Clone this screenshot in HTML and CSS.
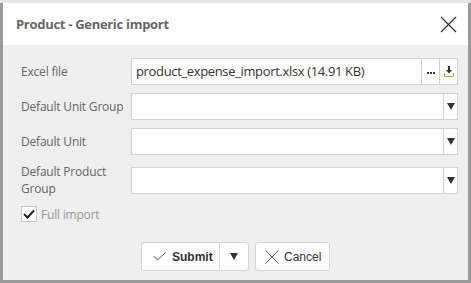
FILE: index.html
```html
<!DOCTYPE html>
<html lang="en">
<head>
  <meta charset="UTF-8">
  <title>Product - Generic import</title>
  <link rel="stylesheet" href="styles.css">
</head>
<body>
  <div class="dialog">
    <div class="dialog-header">
      <h1 class="dialog-title">Product - Generic import</h1>
      <svg class="close-icon" width="17" height="17" viewBox="0 0 17 17">
        <path d="M1 1 L16 16 M16 1 L1 16" stroke="#333" stroke-width="1.3" fill="none"/>
      </svg>
    </div>

    <div class="dialog-body">
      <div class="form-row">
        <label class="form-label">Excel file</label>
        <div class="field">
          <span class="field-text">product_expense_import.xlsx (14.91 KB)</span>
          <span class="field-btn btn-dots">
            <svg width="8" height="2" viewBox="0 0 8 2">
              <rect x="0" y="0" width="2" height="2" fill="#333"/>
              <rect x="3" y="0" width="2" height="2" fill="#333"/>
              <rect x="6" y="0" width="2" height="2" fill="#333"/>
            </svg>
          </span>
          <span class="field-btn">
            <svg width="10" height="11" viewBox="0 0 10 11">
              <path d="M5 0 V6" stroke="#333" stroke-width="2"/>
              <path d="M2 4 L5 7.5 L8 4 Z" fill="#333"/>
              <path d="M0.5 7 V10.5 H9.5 V7" stroke="#e0a040" stroke-width="1" fill="none"/>
            </svg>
          </span>
        </div>
      </div>

      <div class="form-row">
        <label class="form-label">Default Unit Group</label>
        <div class="field">
          <span class="field-text"></span>
          <span class="field-btn select-btn"><span class="arrow"></span></span>
        </div>
      </div>

      <div class="form-row">
        <label class="form-label">Default Unit</label>
        <div class="field">
          <span class="field-text"></span>
          <span class="field-btn select-btn"><span class="arrow"></span></span>
        </div>
      </div>

      <div class="form-row tall">
        <label class="form-label">Default Product Group</label>
        <div class="field">
          <span class="field-text"></span>
          <span class="field-btn select-btn"><span class="arrow"></span></span>
        </div>
      </div>

      <div class="check-row">
        <span class="checkbox">
          <svg width="12" height="10" viewBox="0 0 12 10">
            <path d="M1 5 L4.5 8.5 L11 1.5" stroke="#222" stroke-width="2" fill="none"/>
          </svg>
        </span>
        <span class="check-label">Full import</span>
      </div>

      <div class="actions">
        <div class="split-btn">
          <span class="btn-main">
            <svg width="13" height="9" viewBox="0 0 13 9">
              <path d="M0.5 4 L4.5 8 L12.5 0.5" stroke="#555" stroke-width="1" fill="none"/>
            </svg>
            Submit
          </span>
          <span class="btn-caret"><span class="arrow"></span></span>
        </div>
        <div class="btn">
          <svg width="14" height="14" viewBox="0 0 14 14">
            <path d="M0.5 0.5 L13.5 13.5 M13.5 0.5 L0.5 13.5" stroke="#555" stroke-width="1" fill="none"/>
          </svg>
          Cancel
        </div>
      </div>
    </div>
  </div>
</body>
</html>
```

FILE: styles.css
```css
body {
  margin: 0;
  width: 471px;
  height: 283px;
  background-color: #e6e6e6;
  font-family: 'Open Sans', sans-serif;
  overflow: hidden;
}

.dialog {
  margin-top: 3px;
  height: 277px;
  border: 3px solid #9a9a9a;
  border-top: none;
  background-color: #efefef;
  display: flex;
  flex-direction: column;
}

.dialog-header {
  height: 42px;
  background-color: #fff;
  display: flex;
  align-items: center;
  justify-content: space-between;
  padding: 0 11px 0 13px;
  flex-shrink: 0;
}

.dialog-title {
  margin: 0;
  font-size: 13px;
  font-weight: 700;
  letter-spacing: -0.3px;
  color: #666;
}

.close-icon {
  margin-top: 1px;
}

.dialog-body {
  padding: 13px 10px 0 18px;
}

.form-row {
  display: flex;
  align-items: center;
  height: 27px;
  margin-bottom: 8px;
}

.form-row.tall {
  height: 34px;
}

.form-label {
  width: 110px;
  flex-shrink: 0;
  font-size: 12px;
  letter-spacing: -0.2px;
  line-height: 17px;
  color: #666;
}

.field {
  flex: 1;
  height: 27px;
  box-sizing: border-box;
  border: 1px solid #d2d2d2;
  background-color: #fff;
  display: flex;
  align-items: stretch;
}

.field-text {
  flex: 1;
  padding-left: 4px;
  font-size: 13px;
  letter-spacing: -0.35px;
  line-height: 25px;
  color: #333;
  white-space: nowrap;
  overflow: hidden;
}

.field-btn {
  width: 17px;
  border-left: 1px solid #d2d2d2;
  display: flex;
  align-items: center;
  justify-content: center;
}

.btn-dots {
  padding-top: 3px;
}

.select-btn {
  width: 13px;
}

.arrow {
  width: 0;
  height: 0;
  border-left: 4px solid transparent;
  border-right: 4px solid transparent;
  border-top: 7px solid #333;
}

.check-row {
  display: flex;
  align-items: center;
  height: 16px;
  margin-top: 9px;
}

.checkbox {
  width: 14px;
  height: 14px;
  border: 1px solid #c8c8c8;
  background-color: #fff;
  display: flex;
  align-items: center;
  justify-content: center;
}

.check-label {
  margin-left: 4px;
  font-size: 12px;
  letter-spacing: -0.2px;
  color: #999;
}

.actions {
  display: flex;
  justify-content: center;
  gap: 6px;
  margin-top: 20px;
  padding-right: 8px;
}

.split-btn,
.btn {
  height: 29px;
  box-sizing: border-box;
  border: 1px solid #d4d4d4;
  border-radius: 3px;
  background-color: #fff;
  font-family: 'Liberation Sans', Arial, sans-serif;
  font-size: 12px;
  color: #333;
  display: flex;
  align-items: center;
}

.split-btn {
  width: 108px;
}

.btn-main {
  width: 78px;
  box-sizing: border-box;
  display: flex;
  align-items: center;
  gap: 6px;
  padding-left: 11px;
  font-weight: 700;
  height: 100%;
  border-right: 1px solid #d4d4d4;
}

.btn-caret {
  flex: 1;
  display: flex;
  justify-content: center;
}

.btn {
  width: 75px;
  gap: 5px;
  padding-left: 9px;
}
```
